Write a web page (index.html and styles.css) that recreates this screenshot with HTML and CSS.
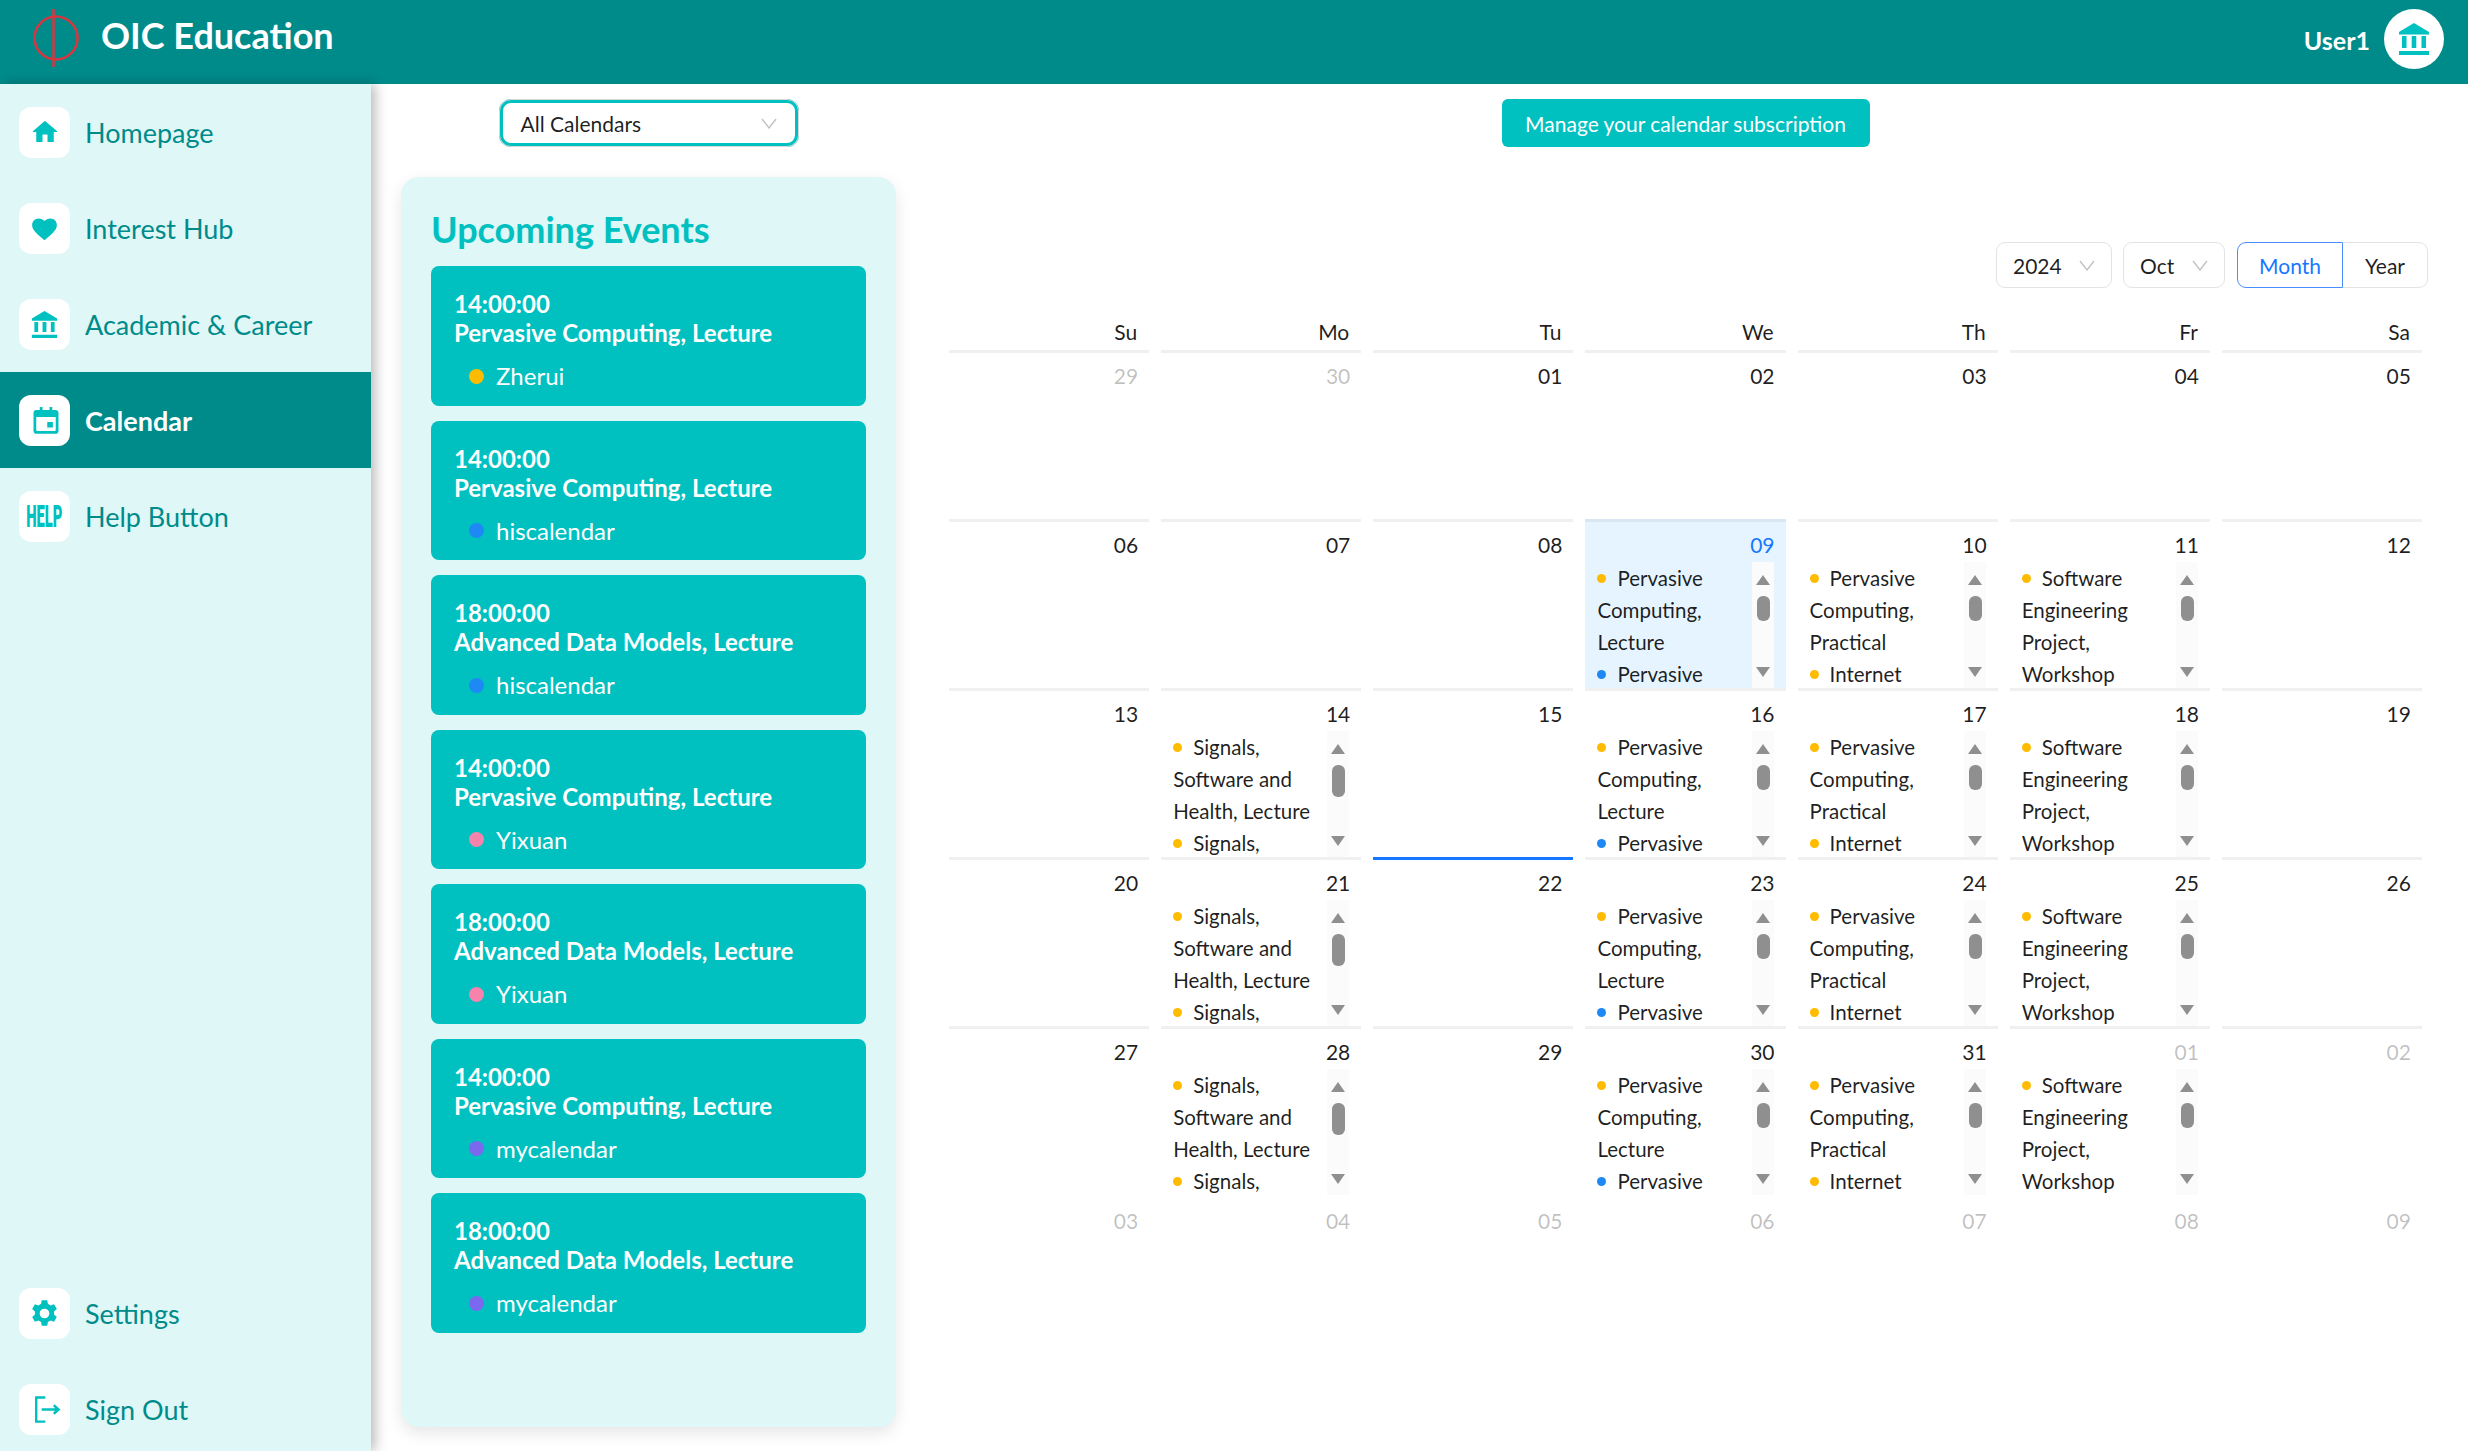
FILE: index.html
```html
<!DOCTYPE html>
<html lang="en">
<head>
    <meta charset="UTF-8">
    <meta name="viewport" content="width=device-width, initial-scale=1.0">
    <title>OIC Education - Calendar</title>
    <link rel="stylesheet" href="styles.css">
</head>
<body>
    <svg class="sprites" aria-hidden="true">
        <symbol id="bank" viewBox="0 0 30 32">
            <path d="M15 0 30 9v2.500H0V9z"/>
            <path d="M3 13h4.500v12H3zM12.700 13h4.600v12h-4.600zM22.500 13H27v12h-4.500zM0 28h30v4H0z"/>
        </symbol>
        <symbol id="chevron" viewBox="0 0 16 11">
            <path d="M1 1l7 9 7-9" fill="none" stroke="#bfbfbf" stroke-width="1.300"/>
        </symbol>
    </svg>

    <header class="topbar">
        <svg class="logo" viewBox="0 0 50 60" aria-hidden="true">
            <circle cx="25" cy="29" r="21.500" fill="none" stroke="#d8363f" stroke-width="2.500"/>
            <path d="M22.500 0v58" stroke="#d8363f" stroke-width="2.500"/>
        </svg>
        <div class="brand">OIC Education</div>
        <div class="user">User1</div>
        <div class="avatar"><svg class="bank-icon"><use href="#bank"/></svg></div>
    </header>

    <div class="layout">
        <nav class="sidebar">
            <div class="menu">
                <a class="menu-item">
                    <span class="menu-icon"><svg class="icon-large" viewBox="0 0 24 24"><path d="M10 19.500v-5.500h4v5.500c0 .3.200.5.500.5h4c.3 0 .5-.2.500-.5V12h2.200c.5 0 .7-.6.300-.9L12.300 3.400a.5.500 0 0 0-.7 0L2.500 11.100c-.4.300-.2.900.3.900H5v7.500c0 .3.200.5.500.5h4c.3 0 .5-.2.500-.5z"/></svg></span>
                    Homepage
                </a>
                <a class="menu-item">
                    <span class="menu-icon"><svg viewBox="0 0 24 24"><path d="M12 22.500l-1.600-1.400C4.700 16.200 1 13 1 8.800 1 5.500 3.600 3 6.900 3c1.900 0 3.800.9 5.100 2.300C13.300 3.900 15.200 3 17.100 3 20.400 3 23 5.500 23 8.800c0 4.200-3.700 7.400-9.400 12.300z"/></svg></span>
                    Interest Hub
                </a>
                <a class="menu-item">
                    <span class="menu-icon"><svg class="bank-icon small"><use href="#bank"/></svg></span>
                    Academic &amp; Career
                </a>
                <a class="menu-item active">
                    <span class="menu-icon"><svg class="icon-large nudge" viewBox="0 0 24 24"><path d="M7 1.500h2.200V4h5.600V1.500H17V4h2.500A2.500 2.500 0 0 1 22 6.500v14a2.500 2.500 0 0 1-2.500 2.500h-15A2.500 2.500 0 0 1 2 20.500v-14A2.500 2.500 0 0 1 4.500 4H7zM4.200 9.500v10.300c0 .6.400 1 1 1h13.600c.6 0 1-.4 1-1V9.500zM13 13.500h4.500V18H13z" fill-rule="evenodd"/></svg></span>
                    Calendar
                </a>
                <a class="menu-item">
                    <span class="menu-icon"><span class="help-mark">HELP</span></span>
                    Help Button
                </a>
            </div>
            <div class="menu menu-bottom">
                <a class="menu-item">
                    <span class="menu-icon"><svg class="icon-mid" viewBox="0 0 24 24"><path fill-rule="evenodd" d="M14.300 1l.5 3 2.200 1.300 2.900-1 2.300 4-2.300 2v2.500l2.300 2-2.300 4-2.900-1-2.200 1.300-.5 3H9.700l-.5-3L7 17.800l-2.900 1-2.300-4 2.300-2v-2.500l-2.300-2 2.300-4 2.900 1 2.200-1.300.5-3zM12 8a4 4 0 1 0 0 8 4 4 0 0 0 0-8z"/></svg></span>
                    Settings
                </a>
                <a class="menu-item">
                    <span class="menu-icon"><svg class="icon-mid nudge" viewBox="0 0 24 24"><path d="M11 2H3.500v20H11M8 12h14M18 8.500l4 3.500-4 3.500" fill="none" stroke="#00c0c0" stroke-width="2"/></svg></span>
                    Sign Out
                </a>
            </div>
        </nav>

        <main class="content">
            <section class="left-col">
                <div class="calendar-picker">
                    <span>All Calendars</span>
                    <svg class="chevron"><use href="#chevron"/></svg>
                </div>
                <div class="upcoming">
                    <h2>Upcoming Events</h2>
                    <div class="event-card">
                        <div class="event-time">14:00:00</div>
                        <div class="event-title">Pervasive Computing, Lecture</div>
                        <div class="event-owner"><i class="dot yellow"></i>Zherui</div>
                    </div>
                    <div class="event-card">
                        <div class="event-time">14:00:00</div>
                        <div class="event-title">Pervasive Computing, Lecture</div>
                        <div class="event-owner"><i class="dot blue"></i>hiscalendar</div>
                    </div>
                    <div class="event-card">
                        <div class="event-time">18:00:00</div>
                        <div class="event-title">Advanced Data Models, Lecture</div>
                        <div class="event-owner"><i class="dot blue"></i>hiscalendar</div>
                    </div>
                    <div class="event-card">
                        <div class="event-time">14:00:00</div>
                        <div class="event-title">Pervasive Computing, Lecture</div>
                        <div class="event-owner"><i class="dot pink"></i>Yixuan</div>
                    </div>
                    <div class="event-card">
                        <div class="event-time">18:00:00</div>
                        <div class="event-title">Advanced Data Models, Lecture</div>
                        <div class="event-owner"><i class="dot pink"></i>Yixuan</div>
                    </div>
                    <div class="event-card">
                        <div class="event-time">14:00:00</div>
                        <div class="event-title">Pervasive Computing, Lecture</div>
                        <div class="event-owner"><i class="dot purple"></i>mycalendar</div>
                    </div>
                    <div class="event-card">
                        <div class="event-time">18:00:00</div>
                        <div class="event-title">Advanced Data Models, Lecture</div>
                        <div class="event-owner"><i class="dot purple"></i>mycalendar</div>
                    </div>
                </div>
            </section>

            <section class="right-col">
                <button class="subscribe-btn">Manage your calendar subscription</button>

                <div class="cal-controls">
                    <div class="cal-select year-select">2024<svg class="chevron"><use href="#chevron"/></svg></div>
                    <div class="cal-select month-select">Oct<svg class="chevron"><use href="#chevron"/></svg></div>
                    <div class="mode-switch">
                        <span class="mode selected">Month</span>
                        <span class="mode">Year</span>
                    </div>
                </div>

                <div class="cal-head">
                    <div>Su</div><div>Mo</div><div>Tu</div><div>We</div><div>Th</div><div>Fr</div><div>Sa</div>
                </div>

                <div class="cal-grid">
                    <div class="cell muted"><div class="num">29</div></div>
                    <div class="cell muted"><div class="num">30</div></div>
                    <div class="cell"><div class="num">01</div></div>
                    <div class="cell"><div class="num">02</div></div>
                    <div class="cell"><div class="num">03</div></div>
                    <div class="cell"><div class="num">04</div></div>
                    <div class="cell"><div class="num">05</div></div>

                    <div class="cell"><div class="num">06</div></div>
                    <div class="cell"><div class="num">07</div></div>
                    <div class="cell"><div class="num">08</div></div>
                    <div class="cell selected">
                        <div class="num">09</div>
                        <div class="day-events">
                            <ul><li><i class="dot yellow"></i>Pervasive Computing, Lecture</li><li><i class="dot blue"></i>Pervasive Computing, Lecture</li></ul>
                            <div class="fake-scroll"><b class="up"></b><b class="thumb"></b><b class="down"></b></div>
                        </div>
                    </div>
                    <div class="cell">
                        <div class="num">10</div>
                        <div class="day-events">
                            <ul><li><i class="dot yellow"></i>Pervasive Computing, Practical</li><li><i class="dot yellow"></i>Internet Computing, Lecture</li></ul>
                            <div class="fake-scroll"><b class="up"></b><b class="thumb"></b><b class="down"></b></div>
                        </div>
                    </div>
                    <div class="cell">
                        <div class="num">11</div>
                        <div class="day-events">
                            <ul><li><i class="dot yellow"></i>Software Engineering Project, Workshop</li><li><i class="dot yellow"></i>Software Engineering Project, Lecture</li></ul>
                            <div class="fake-scroll"><b class="up"></b><b class="thumb"></b><b class="down"></b></div>
                        </div>
                    </div>
                    <div class="cell"><div class="num">12</div></div>

                    <div class="cell"><div class="num">13</div></div>
                    <div class="cell">
                        <div class="num">14</div>
                        <div class="day-events">
                            <ul><li><i class="dot yellow"></i>Signals, Software and Health, Lecture</li><li><i class="dot yellow"></i>Signals, Software and Health, Practical</li></ul>
                            <div class="fake-scroll tall"><b class="up"></b><b class="thumb"></b><b class="down"></b></div>
                        </div>
                    </div>
                    <div class="cell"><div class="num">15</div></div>
                    <div class="cell">
                        <div class="num">16</div>
                        <div class="day-events">
                            <ul><li><i class="dot yellow"></i>Pervasive Computing, Lecture</li><li><i class="dot blue"></i>Pervasive Computing, Lecture</li></ul>
                            <div class="fake-scroll"><b class="up"></b><b class="thumb"></b><b class="down"></b></div>
                        </div>
                    </div>
                    <div class="cell">
                        <div class="num">17</div>
                        <div class="day-events">
                            <ul><li><i class="dot yellow"></i>Pervasive Computing, Practical</li><li><i class="dot yellow"></i>Internet Computing, Lecture</li></ul>
                            <div class="fake-scroll"><b class="up"></b><b class="thumb"></b><b class="down"></b></div>
                        </div>
                    </div>
                    <div class="cell">
                        <div class="num">18</div>
                        <div class="day-events">
                            <ul><li><i class="dot yellow"></i>Software Engineering Project, Workshop</li><li><i class="dot yellow"></i>Software Engineering Project, Lecture</li></ul>
                            <div class="fake-scroll"><b class="up"></b><b class="thumb"></b><b class="down"></b></div>
                        </div>
                    </div>
                    <div class="cell"><div class="num">19</div></div>

                    <div class="cell"><div class="num">20</div></div>
                    <div class="cell">
                        <div class="num">21</div>
                        <div class="day-events">
                            <ul><li><i class="dot yellow"></i>Signals, Software and Health, Lecture</li><li><i class="dot yellow"></i>Signals, Software and Health, Practical</li></ul>
                            <div class="fake-scroll tall"><b class="up"></b><b class="thumb"></b><b class="down"></b></div>
                        </div>
                    </div>
                    <div class="cell today"><div class="num">22</div></div>
                    <div class="cell">
                        <div class="num">23</div>
                        <div class="day-events">
                            <ul><li><i class="dot yellow"></i>Pervasive Computing, Lecture</li><li><i class="dot blue"></i>Pervasive Computing, Lecture</li></ul>
                            <div class="fake-scroll"><b class="up"></b><b class="thumb"></b><b class="down"></b></div>
                        </div>
                    </div>
                    <div class="cell">
                        <div class="num">24</div>
                        <div class="day-events">
                            <ul><li><i class="dot yellow"></i>Pervasive Computing, Practical</li><li><i class="dot yellow"></i>Internet Computing, Lecture</li></ul>
                            <div class="fake-scroll"><b class="up"></b><b class="thumb"></b><b class="down"></b></div>
                        </div>
                    </div>
                    <div class="cell">
                        <div class="num">25</div>
                        <div class="day-events">
                            <ul><li><i class="dot yellow"></i>Software Engineering Project, Workshop</li><li><i class="dot yellow"></i>Software Engineering Project, Lecture</li></ul>
                            <div class="fake-scroll"><b class="up"></b><b class="thumb"></b><b class="down"></b></div>
                        </div>
                    </div>
                    <div class="cell"><div class="num">26</div></div>

                    <div class="cell"><div class="num">27</div></div>
                    <div class="cell">
                        <div class="num">28</div>
                        <div class="day-events">
                            <ul><li><i class="dot yellow"></i>Signals, Software and Health, Lecture</li><li><i class="dot yellow"></i>Signals, Software and Health, Practical</li></ul>
                            <div class="fake-scroll tall"><b class="up"></b><b class="thumb"></b><b class="down"></b></div>
                        </div>
                    </div>
                    <div class="cell"><div class="num">29</div></div>
                    <div class="cell">
                        <div class="num">30</div>
                        <div class="day-events">
                            <ul><li><i class="dot yellow"></i>Pervasive Computing, Lecture</li><li><i class="dot blue"></i>Pervasive Computing, Lecture</li></ul>
                            <div class="fake-scroll"><b class="up"></b><b class="thumb"></b><b class="down"></b></div>
                        </div>
                    </div>
                    <div class="cell">
                        <div class="num">31</div>
                        <div class="day-events">
                            <ul><li><i class="dot yellow"></i>Pervasive Computing, Practical</li><li><i class="dot yellow"></i>Internet Computing, Lecture</li></ul>
                            <div class="fake-scroll"><b class="up"></b><b class="thumb"></b><b class="down"></b></div>
                        </div>
                    </div>
                    <div class="cell muted">
                        <div class="num">01</div>
                        <div class="day-events">
                            <ul><li><i class="dot yellow"></i>Software Engineering Project, Workshop</li><li><i class="dot yellow"></i>Software Engineering Project, Lecture</li></ul>
                            <div class="fake-scroll"><b class="up"></b><b class="thumb"></b><b class="down"></b></div>
                        </div>
                    </div>
                    <div class="cell muted"><div class="num">02</div></div>

                    <div class="cell muted plain"><div class="num">03</div></div>
                    <div class="cell muted plain"><div class="num">04</div></div>
                    <div class="cell muted plain"><div class="num">05</div></div>
                    <div class="cell muted plain"><div class="num">06</div></div>
                    <div class="cell muted plain"><div class="num">07</div></div>
                    <div class="cell muted plain"><div class="num">08</div></div>
                    <div class="cell muted plain"><div class="num">09</div></div>
                </div>
            </section>
        </main>
    </div>
</body>
</html>
```

FILE: styles.css
```css
:root {
    --dark-teal: #008b8b;
    --teal: #00c0c0;
    --pale-teal: #dff7f7;
    --text-color: rgba(0,0,0,0.88);
    --muted-color: rgba(0,0,0,0.25);
    --line-color: #f0f0f0;
    --blue: #1677ff;
}
html, body {
    height: 100%;
}
body {
    margin: 0;
    overflow: hidden;
    font-family: "Lato", "Liberation Sans", sans-serif;
    color: var(--text-color);
    background-color: white;
}
.sprites {
    display: none;
}

/* top bar */
.topbar {
    height: 84px;
    display: flex;
    align-items: center;
    background-color: var(--dark-teal);
    color: white;
}
.logo {
    width: 50px;
    height: 60px;
    margin: 0 0 6px 31px;
}
.brand {
    margin: 0 0 14px 20px;
    font-size: 36px;
    font-weight: 700;
}
.user {
    margin: 0 14px 5px auto;
    font-size: 25px;
    font-weight: 700;
}
.avatar {
    width: 60px;
    height: 60px;
    margin: 0 24px 6px 0;
    border-radius: 50%;
    background-color: white;
    display: flex;
    align-items: center;
    justify-content: center;
}
.bank-icon {
    width: 30px;
    height: 32px;
    fill: var(--teal);
}

.layout {
    display: flex;
    height: calc(100% - 84px);
}

/* sidebar */
.sidebar {
    width: 371px;
    flex-shrink: 0;
    background-color: var(--pale-teal);
    box-shadow: 4px 0 12px rgba(0,0,0,0.28);
    position: relative;
}
.menu-bottom {
    margin-top: 701px;
}
.menu-item {
    height: 96px;
    display: flex;
    align-items: center;
    gap: 15px;
    padding-left: 19px;
    font-size: 27px;
    color: var(--dark-teal);
}
.menu-item.active {
    background-color: var(--dark-teal);
    color: white;
    font-weight: 700;
}
.menu-icon {
    width: 51px;
    height: 51px;
    flex-shrink: 0;
    border-radius: 12px;
    background-color: white;
    display: flex;
    align-items: center;
    justify-content: center;
    overflow: hidden;
}
.menu-icon svg {
    width: 27px;
    height: 27px;
    fill: var(--teal);
}
.menu-icon svg.icon-large {
    width: 30px;
    height: 30px;
}
.menu-icon svg.icon-mid {
    width: 29px;
    height: 29px;
}
.menu-icon svg.nudge {
    margin-left: 3px;
}
.help-mark {
    flex-shrink: 0;
    font-family: "Roboto", sans-serif;
    font-size: 32px;
    font-weight: 900;
    line-height: 1;
    color: var(--teal);
    transform: scale(0.46, 1);
}

/* left column */
.content {
    flex: 1;
    display: flex;
    min-width: 0;
}
.left-col {
    width: 555px;
    box-sizing: border-box;
    flex-shrink: 0;
    padding: 15px 30px 0;
    display: flex;
    flex-direction: column;
    align-items: center;
}
.calendar-picker {
    width: 300px;
    height: 48px;
    box-sizing: border-box;
    border: 4px solid var(--teal);
    border-radius: 12px;
    outline: 1px solid #d9d9d9;
    outline-offset: -1px;
    padding: 0 18px 0 18px;
    display: flex;
    align-items: center;
    justify-content: space-between;
    font-size: 21px;
}
.chevron {
    width: 16px;
    height: 11px;
    flex-shrink: 0;
}
.upcoming {
    width: 495px;
    height: 1250px;
    box-sizing: border-box;
    margin-top: 30px;
    padding: 27px 30px 0;
    background-color: #e0f7f7;
    border-radius: 18px;
    box-shadow: 0 6px 16px rgba(0,0,0,0.1);
}
.upcoming h2 {
    margin: 0 0 12px;
    font-size: 36px;
    line-height: 50px;
    font-weight: 700;
    color: var(--teal);
}
.event-card {
    height: 139.5px;
    box-sizing: border-box;
    margin-bottom: 15px;
    padding: 23px 23px 0;
    background-color: var(--teal);
    border-radius: 8px;
    color: white;
}
.event-time,
.event-title {
    font-size: 24px;
    line-height: 29px;
    font-weight: 700;
}
.event-owner {
    display: flex;
    align-items: center;
    margin: 14px 0 0 15px;
    font-size: 24px;
    line-height: 30px;
}
.event-owner .dot {
    width: 15px;
    height: 15px;
    margin-right: 12px;
}
.dot {
    display: inline-block;
    border-radius: 50%;
}
.yellow { background-color: #ffbb00; }
.blue { background-color: #1e88f5; }
.pink { background-color: #f783ac; }
.purple { background-color: #7b68ee; }

/* calendar */
.right-col {
    flex: 1;
    min-width: 0;
    padding: 15px 46px 0 23px;
    display: flex;
    flex-direction: column;
}
.subscribe-btn {
    align-self: center;
    width: 368px;
    height: 48px;
    border: none;
    border-radius: 6px;
    background-color: var(--teal);
    color: white;
    font-family: inherit;
    font-size: 21px;
}
.cal-controls {
    display: flex;
    justify-content: flex-end;
    gap: 11px;
    margin: 95px -6px 0 0;
}
.cal-select {
    height: 46px;
    box-sizing: border-box;
    border: 1px solid #e3e3e3;
    border-radius: 9px;
    display: flex;
    align-items: center;
    justify-content: space-between;
    font-size: 21px;
}
.year-select {
    width: 116px;
    padding: 0 16px 0 16px;
}
.month-select {
    width: 102px;
    padding: 0 16px 0 16px;
}
.mode-switch {
    display: flex;
    margin-left: 1px;
}
.mode {
    height: 46px;
    box-sizing: border-box;
    width: 85px;
    border: 1px solid #e3e3e3;
    border-left: none;
    border-radius: 0 9px 9px 0;
    display: flex;
    align-items: center;
    justify-content: center;
    font-size: 21px;
}
.mode.selected {
    width: 106px;
    border: 1px solid #4a8dff;
    border-radius: 9px 0 0 9px;
    color: var(--blue);
}
.cal-head,
.cal-grid {
    display: grid;
    grid-template-columns: repeat(7, 1fr);
    column-gap: 12px;
    width: 1473px;
}
.cal-head div {
    height: 62px;
    box-sizing: border-box;
    padding: 28px 12px 0 0;
    text-align: right;
    font-size: 21px;
    line-height: 32px;
}
.cal-grid {
    grid-auto-rows: 169px;
}
.cell {
    min-width: 0;
    box-sizing: border-box;
    border-top: 3px solid var(--line-color);
    padding: 7px 12px 0;
    display: flex;
    flex-direction: column;
    overflow: hidden;
}
.cell.plain {
    border-top-color: transparent;
}
.cell.selected {
    background-color: #e6f4ff;
    border-top-color: #d8e7f3;
}
.cell.today {
    border-top-color: var(--blue);
}
.num {
    margin: 0 -1px 1px 0;
    text-align: right;
    font-size: 21px;
    line-height: 32px;
    flex-shrink: 0;
}
.muted .num {
    color: var(--muted-color);
}
.selected .num {
    color: var(--blue);
}
.day-events {
    flex: 1;
    min-height: 0;
    display: flex;
    overflow: hidden;
}
.day-events ul {
    flex: 1;
    min-width: 0;
    margin: 0;
    padding: 0;
    list-style: none;
    font-size: 20.5px;
    line-height: 32px;
}
.day-events .dot {
    width: 9px;
    height: 9px;
    margin-right: 11px;
    vertical-align: 3px;
}

/* the browser's old style scrollbar, drawn by hand */
.fake-scroll {
    width: 22px;
    flex-shrink: 0;
    background-color: #fbfbfb;
    position: relative;
}
.fake-scroll b {
    position: absolute;
}
.fake-scroll .up,
.fake-scroll .down {
    width: 0;
    height: 0;
    left: 4px;
    border-left: 7px solid transparent;
    border-right: 7px solid transparent;
}
.fake-scroll .up {
    top: 13px;
    border-bottom: 10px solid #8f8f8f;
}
.fake-scroll .down {
    bottom: 11px;
    border-top: 10px solid #8f8f8f;
}
.fake-scroll .thumb {
    top: 34px;
    left: 5px;
    width: 13px;
    height: 25px;
    border-radius: 6px;
    background-color: #8f8f8f;
}
.fake-scroll.tall .thumb {
    height: 32px;
}
```
